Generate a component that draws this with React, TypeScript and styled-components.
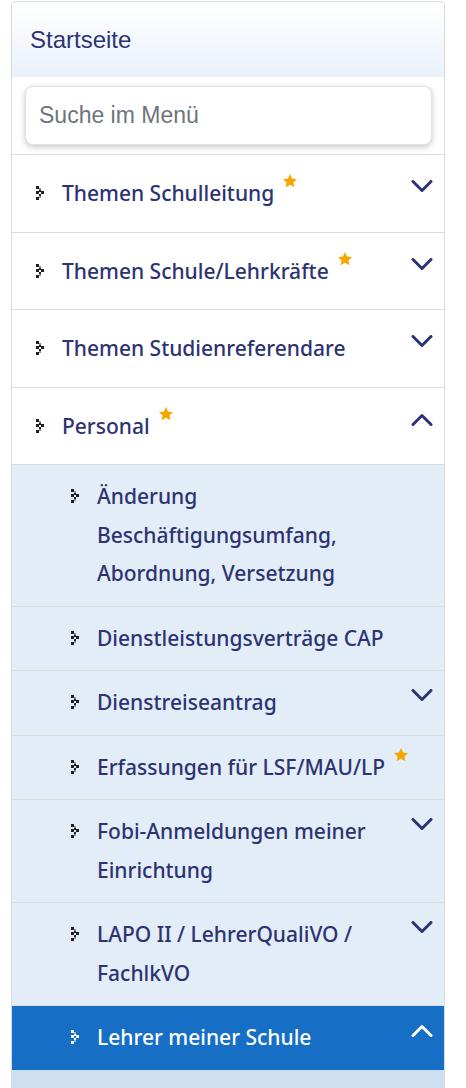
import React from "react";
import styled, { createGlobalStyle } from "styled-components";

const GlobalStyle = createGlobalStyle`
  html, body {
    margin: 0;
    padding: 0;
    background: #ffffff;
  }
  body {
    padding: 1px 0 0 11px;
    font-family: "Noto Sans", "Liberation Sans", sans-serif;
  }
`;

const Panel = styled.nav`
  width: 434px;
  box-sizing: border-box;
  border: 1px solid #dcdcdc;
  border-radius: 4px 4px 0 0;
  overflow: hidden;
  background: #fff;
`;

const Header = styled.div`
  height: 75px;
  display: flex;
  align-items: center;
  padding-left: 18px;
  background: linear-gradient(180deg, #ffffff 0%, #eaf1fa 100%);
  font-family: "Liberation Sans", Arial, sans-serif;
  font-size: 24px;
  color: #2d3476;
`;

const SearchWrap = styled.div`
  padding: 9px 12px 9px 13px;
`;

const SearchInput = styled.input`
  width: 100%;
  height: 59px;
  box-sizing: border-box;
  border: 1px solid #e2e2e2;
  border-radius: 8px;
  box-shadow: 0 2px 6px rgba(0, 0, 0, 0.22);
  padding: 0 13px;
  font-family: "Liberation Sans", Arial, sans-serif;
  font-size: 23px;
  color: #333;
  outline: none;

  &::placeholder {
    color: #6c757d;
  }
`;

const List = styled.div<{ $level: number }>`
  background: ${(p) =>
    p.$level === 1 ? "#ffffff" : p.$level === 2 ? "#e3edf7" : "#cddff0"};
  min-height: ${(p) => (p.$level === 3 ? "40px" : "0")};
`;

const Row = styled.div<{ $level: number; $active?: boolean }>`
  display: flex;
  align-items: flex-start;
  border-top: 1px solid #dcdcdc;
  padding: ${(p) => (p.$level === 1 ? "19px 11px 19px 24px" : "12px 11px 13px 59px")};
  background: ${(p) => (p.$active ? "#166ec5" : "transparent")};
  color: ${(p) => (p.$active ? "#ffffff" : "#2d3372")};
`;

const Bullet = styled.svg`
  flex: none;
  width: 8px;
  height: 14px;
  margin-top: 12px;
  margin-right: 18px;
`;

const Label = styled.div`
  flex: 1;
  font-size: 21px;
  font-weight: 500;
  line-height: 38.5px;
  padding-right: 18px;
`;

const Star = styled.svg`
  display: inline-block;
  width: 16px;
  height: 16px;
  vertical-align: top;
  margin-left: 8px;
  margin-top: -1px;
`;

const Chevron = styled.svg`
  flex: none;
  width: 22px;
  height: 13px;
  margin-top: 6px;
`;

const BulletIcon: React.FC<{ light?: boolean }> = ({ light }) => {
  const dark = light ? "#ffffff" : "#1e1e1e";
  const soft = light ? "#8fbbe6" : "#8c8c8c";
  return (
    <Bullet viewBox="0 0 8 14">
      <rect x="0" y="0" width="3" height="3" fill={dark} />
      <rect x="3" y="2" width="2" height="2" fill={soft} />
      <rect x="3" y="4" width="2" height="2" fill={dark} />
      <rect x="0" y="5" width="3" height="3" fill={dark} />
      <rect x="5" y="5" width="3" height="3" fill={dark} />
      <rect x="3" y="8" width="2" height="2" fill={dark} />
      <rect x="3" y="10" width="2" height="2" fill={soft} />
      <rect x="0" y="11" width="3" height="3" fill={dark} />
    </Bullet>
  );
};

const StarIcon = () => (
  <Star viewBox="0 0 24 24">
    <path
      d="M12 1.5l3.2 6.9 7.3.8-5.4 5 1.5 7.3L12 17.8l-6.6 3.7 1.5-7.3-5.4-5 7.3-.8z"
      fill="#f7a600"
    />
  </Star>
);

const ChevronIcon: React.FC<{ up?: boolean; light?: boolean }> = ({ up, light }) => (
  <Chevron viewBox="0 0 22 13">
    <path
      d={up ? "M2 11.5L11 2.5l9 9" : "M2 1.5l9 9 9-9"}
      fill="none"
      stroke={light ? "#ffffff" : "#2d3372"}
      strokeWidth="3"
      strokeLinecap="round"
      strokeLinejoin="round"
    />
  </Chevron>
);

type Item = {
  label: string;
  star?: boolean;
  chevron?: "down" | "up";
  active?: boolean;
};

const MenuRow: React.FC<{ item: Item; level: number }> = ({ item, level }) => (
  <Row $level={level} $active={item.active}>
    <BulletIcon light={item.active} />
    <Label>
      {item.label}
      {item.star && <StarIcon />}
    </Label>
    {item.chevron && <ChevronIcon up={item.chevron === "up"} light={item.active} />}
  </Row>
);

const topItems: Item[] = [
  { label: "Themen Schulleitung", star: true, chevron: "down" },
  { label: "Themen Schule/Lehrkräfte", star: true, chevron: "down" },
  { label: "Themen Studienreferendare", chevron: "down" },
];

const personalItems: Item[] = [
  { label: "Änderung Beschäftigungsumfang, Abordnung, Versetzung" },
  { label: "Dienstleistungsverträge CAP" },
  { label: "Dienstreiseantrag", chevron: "down" },
  { label: "Erfassungen für LSF/MAU/LP", star: true },
  { label: "Fobi-Anmeldungen meiner Einrichtung", chevron: "down" },
  { label: "LAPO II / LehrerQualiVO / FachlkVO", chevron: "down" },
  { label: "Lehrer meiner Schule", chevron: "up", active: true },
];

const App: React.FC = () => {
  return (
    <>
      <GlobalStyle />
      <Panel>
        <Header>Startseite</Header>
        <SearchWrap>
          <SearchInput placeholder="Suche im Menü" />
        </SearchWrap>
        <List $level={1}>
          {topItems.map((item) => (
            <MenuRow key={item.label} item={item} level={1} />
          ))}
          <MenuRow item={{ label: "Personal", star: true, chevron: "up" }} level={1} />
          <List $level={2}>
            {personalItems.map((item) => (
              <MenuRow key={item.label} item={item} level={2} />
            ))}
            <List $level={3} />
          </List>
        </List>
      </Panel>
    </>
  );
};

export default App;
